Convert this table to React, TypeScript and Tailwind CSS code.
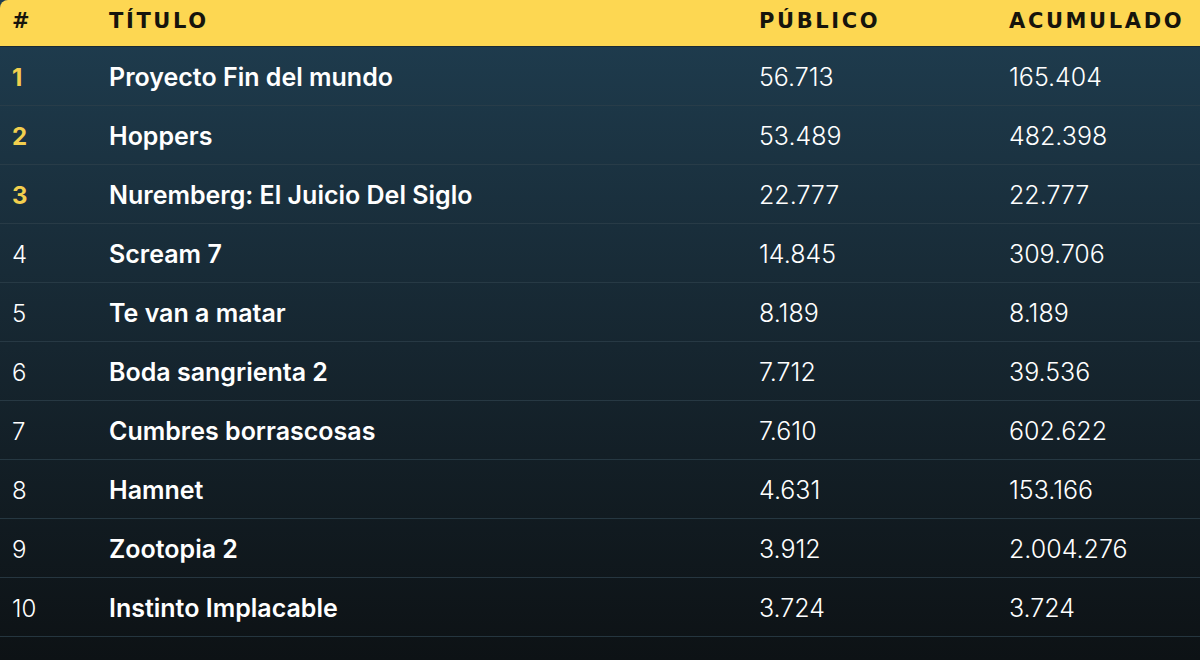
const rows = [
  { pos: 1, title: "Proyecto Fin del mundo", publico: "56.713", acumulado: "165.404" },
  { pos: 2, title: "Hoppers", publico: "53.489", acumulado: "482.398" },
  { pos: 3, title: "Nuremberg: El Juicio Del Siglo", publico: "22.777", acumulado: "22.777" },
  { pos: 4, title: "Scream 7", publico: "14.845", acumulado: "309.706" },
  { pos: 5, title: "Te van a matar", publico: "8.189", acumulado: "8.189" },
  { pos: 6, title: "Boda sangrienta 2", publico: "7.712", acumulado: "39.536" },
  { pos: 7, title: "Cumbres borrascosas", publico: "7.610", acumulado: "602.622" },
  { pos: 8, title: "Hamnet", publico: "4.631", acumulado: "153.166" },
  { pos: 9, title: "Zootopia 2", publico: "3.912", acumulado: "2.004.276" },
  { pos: 10, title: "Instinto Implacable", publico: "3.724", acumulado: "3.724" },
];

export default function App() {
  return (
    <div className="w-[1200px] h-[660px] overflow-hidden bg-gradient-to-b from-[#1f3e51] to-[#0d1215] font-['Inter',sans-serif]">
      <div className="rounded-tl-lg bg-[#fdd752] h-[47px] pb-[2px] border-b border-[#1a2a33] flex items-center font-['DejaVu_Sans',sans-serif] font-bold text-[21px] tracking-[0.125em] text-[#16140c]">
        <div className="w-[109px] pl-[12px]">#</div>
        <div className="w-[650px]">TÍTULO</div>
        <div className="w-[250px]">PÚBLICO</div>
        <div className="flex-1">ACUMULADO</div>
      </div>
      {rows.map((r) => (
        <div
          key={r.pos}
          className="h-[59px] pt-[3px] flex items-center border-b border-[#2c3f4a]/80 text-[25px] text-white"
        >
          <div
            className={
              r.pos <= 3
                ? "w-[109px] pl-[12px] text-[24px] font-bold text-[#f2cf4e]"
                : "w-[109px] pl-[12px] text-[24px] font-light"
            }
          >
            {r.pos}
          </div>
          <div className="w-[650px] font-semibold">{r.title}</div>
          <div className="w-[250px] font-light">{r.publico}</div>
          <div className="flex-1 font-light">{r.acumulado}</div>
        </div>
      ))}
    </div>
  );
}
